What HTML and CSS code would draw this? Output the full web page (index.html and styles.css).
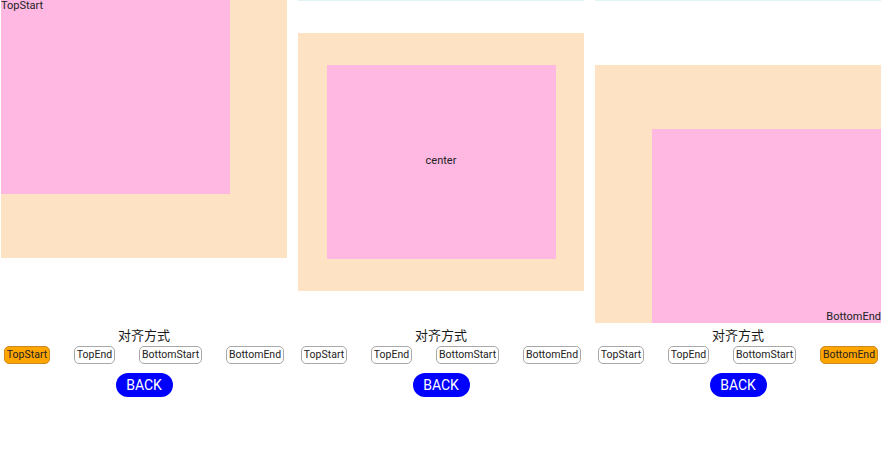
FILE: index.html
```html
<!DOCTYPE html>
<html>
<head>
<meta charset="utf-8">
<link rel="stylesheet" href="styles.css">
</head>
<body>
<div class="page">
  <div class="col">
    <div class="stack align-start">
      <div class="outer">
        <div class="inner inner-start"><span class="label">TopStart</span></div>
      </div>
    </div>
    <div class="title">对齐方式</div>
    <div class="btns">
      <span class="btn w-ts active">TopStart</span>
      <span class="btn w-te">TopEnd</span>
      <span class="btn w-bs">BottomStart</span>
      <span class="btn w-be">BottomEnd</span>
    </div>
    <div class="back-row"><span class="back">BACK</span></div>
  </div>
  <div class="col">
    <div class="stack align-center">
      <div class="outer outer-center">
        <div class="inner inner-center"><span class="label">center</span></div>
      </div>
    </div>
    <div class="title">对齐方式</div>
    <div class="btns">
      <span class="btn w-ts">TopStart</span>
      <span class="btn w-te">TopEnd</span>
      <span class="btn w-bs">BottomStart</span>
      <span class="btn w-be">BottomEnd</span>
    </div>
    <div class="back-row"><span class="back">BACK</span></div>
  </div>
  <div class="col">
    <div class="stack align-end">
      <div class="outer outer-end">
        <div class="inner inner-end"><span class="label">BottomEnd</span></div>
      </div>
    </div>
    <div class="title">对齐方式</div>
    <div class="btns">
      <span class="btn w-ts">TopStart</span>
      <span class="btn w-te">TopEnd</span>
      <span class="btn w-bs">BottomStart</span>
      <span class="btn w-be active">BottomEnd</span>
    </div>
    <div class="back-row"><span class="back">BACK</span></div>
  </div>
</div>
</body>
</html>
```
FILE: styles.css
```css
html, body {
  margin: 0;
  padding: 0;
  background: #ffffff;
}
body {
  font-family: Roboto, "Noto Sans CJK SC", sans-serif;
  color: #222222;
}
.page {
  display: flex;
  gap: 11px;
  padding-left: 1px;
}
.col {
  width: 286px;
  flex-shrink: 0;
  display: flex;
  flex-direction: column;
}
.stack {
  height: 323px;
  display: flex;
  flex-direction: column;
  border-top: 1px solid #dff5f5;
  box-sizing: border-box;
}
.align-start { justify-content: flex-start; }
.align-center { justify-content: center; }
.align-end { justify-content: flex-end; }
.outer {
  width: 286px;
  height: 258px;
  background: #fde3c4;
  display: flex;
}
.align-start .outer { margin-top: -1px; }
.outer-center { align-items: center; justify-content: center; }
.outer-end { align-items: flex-end; justify-content: flex-end; }
.inner {
  width: 229px;
  height: 194px;
  background: #feb8e2;
  display: flex;
  font-size: 11px;
  line-height: 12px;
  color: #222222;
}
.inner-start { align-items: flex-start; justify-content: flex-start; }
.inner-center { align-items: center; justify-content: center; }
.inner-end { align-items: flex-end; justify-content: flex-end; }
.inner-center .label { margin-bottom: 2px; }
.title {
  margin-top: 2px;
  height: 20px;
  line-height: 20px;
  text-align: center;
  font-family: "Noto Sans CJK SC", sans-serif;
  font-size: 13px;
  color: #1a1a1a;
}
.btns {
  display: flex;
  justify-content: center;
  gap: 24px;
  margin-top: 1px;
}
.btn {
  flex-shrink: 0;
  height: 18px;
  box-sizing: border-box;
  border: 1px solid #a8a8a8;
  border-radius: 5px;
  font-size: 10.5px;
  line-height: 16px;
  text-align: center;
  white-space: nowrap;
  color: #222222;
  background: #ffffff;
}
.w-ts { width: 46px; }
.w-te { width: 41px; }
.w-bs { width: 63px; }
.w-be { width: 58px; }
.btn.active {
  background: #ffa500;
  border-color: #c88a20;
}
.back-row {
  display: flex;
  justify-content: center;
  margin-top: 9px;
}
.back {
  width: 57px;
  height: 24px;
  border-radius: 12px;
  background: #0000ff;
  color: #ffffff;
  font-size: 14px;
  line-height: 24px;
  text-align: center;
}
```
